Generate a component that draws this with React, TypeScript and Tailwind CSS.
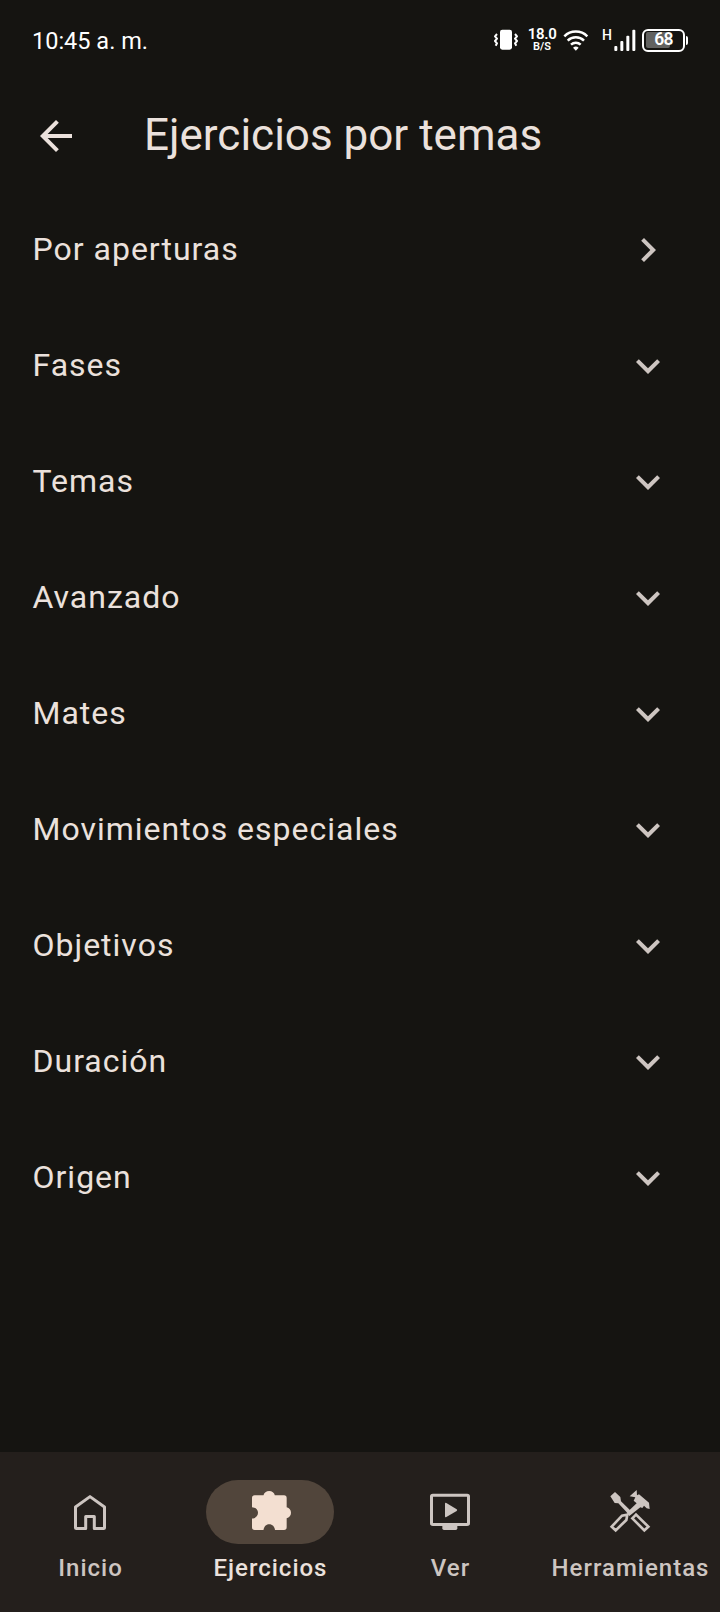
import type { ReactNode } from 'react';

type Section = { label: string; expandable: boolean };

const sections: Section[] = [
  { label: 'Por aperturas', expandable: false },
  { label: 'Fases', expandable: true },
  { label: 'Temas', expandable: true },
  { label: 'Avanzado', expandable: true },
  { label: 'Mates', expandable: true },
  { label: 'Movimientos especiales', expandable: true },
  { label: 'Objetivos', expandable: true },
  { label: 'Duración', expandable: true },
  { label: 'Origen', expandable: true },
];

function VibrateIcon() {
  return (
    <svg className="h-6 w-[26px]" viewBox="0 0 78 72" fill="none" stroke="#fff" strokeWidth="6">
      <rect x="21" y="5" width="36" height="60" rx="7" fill="#fff" stroke="none" />
      <path d="M12 18l-6 7 6 7-6 7 6 7-4 7M66 18l6 7-6 7 6 7-6 7 4 7" strokeLinejoin="round" />
    </svg>
  );
}

function WifiIcon() {
  return (
    <svg className="h-[21px] w-[26px]" viewBox="0 0 78 63" fill="none" stroke="#fff" strokeWidth="7.500">
      <path d="M4 19a49 49 0 0 1 69 0M14 32a35 35 0 0 1 49 0M24 44a21 21 0 0 1 29 0" />
      <path d="M30 53q8.500-7 17 0l-8.500 9z" fill="#fff" stroke="none" />
    </svg>
  );
}

function SignalIcon() {
  return (
    <svg className="h-[23px] w-[22px]" viewBox="0 0 66 69" fill="#fff">
      <rect x="1" y="51" width="9" height="15" rx="3" />
      <rect x="19" y="36" width="9" height="30" rx="3" />
      <rect x="37" y="20" width="9" height="46" rx="3" />
      <rect x="55" y="2" width="9" height="64" rx="3" />
    </svg>
  );
}

function Battery() {
  return (
    <div className="flex items-center gap-[1px]">
      <div className="relative flex h-[23px] w-[43px] items-center rounded-[6px] border-2 border-white p-[2px]">
        <div className="h-[16px] w-[24px] rounded-[2px] bg-[#626260]" />
        <span className="absolute inset-0 flex items-center justify-center text-[17.5px] leading-none font-semibold tracking-[-0.8px]">
          68
        </span>
      </div>
      <div className="h-[9px] w-[2px] rounded-r-sm bg-white" />
    </div>
  );
}

function StatusBar() {
  return (
    <div className="flex h-20 items-center justify-between pr-8 pl-8 text-white">
      <span className="pt-[3px] text-[23.5px] leading-none">10:45 a. m.</span>
      <div className="flex items-center">
        <VibrateIcon />
        <div className="mt-[-1px] ml-[9px] flex w-[28px] flex-col items-center whitespace-nowrap">
          <span className="text-[15px] leading-[14px] font-semibold tracking-[-0.3px]">18.0</span>
          <span className="text-[11px] leading-[11px] font-semibold">B/S</span>
        </div>
        <div className="ml-[7px]"><WifiIcon /></div>
        <span className="ml-[13px] pb-[10px] text-[14px] leading-none font-medium">H</span>
        <div className="ml-[2px]"><SignalIcon /></div>
        <div className="ml-[6px]"><Battery /></div>
      </div>
    </div>
  );
}

function HomeIcon() {
  return (
    <svg className="size-12" viewBox="66 1488 48 48" fill="none" stroke="#cdc5c1" strokeWidth="3" strokeLinejoin="round">
      <path d="M75.500 1507L90 1496.600 104.500 1507V1527.500a1 1 0 0 1-1 1H94.300V1516.500H85.700V1528.500H76.500a1 1 0 0 1-1-1z" />
    </svg>
  );
}

function PuzzleIcon() {
  return (
    <svg className="size-12" viewBox="198 144 144 144" fill="#f3dfd1">
      <path d="M224 166H250.500C252 158 259 153 267.500 153S283 158 284.500 166H312a8 8 0 0 1 8 8V202C328 203.500 333 210 333 218.500S328 233.500 320 235V262a8 8 0 0 1-8 8H285C284 260 277 253 267.500 253S252 260 250.500 270H224a8 8 0 0 1-8-8V235.500C227 235.500 234 228 234 218.500S227 202 216 201.500V174a8 8 0 0 1 8-8z" />
    </svg>
  );
}

function WatchIcon() {
  return (
    <svg className="size-12" viewBox="198 144 144 144" fill="#cdc5c1">
      <rect x="214.500" y="165.500" width="111" height="88" rx="4" fill="none" stroke="#cdc5c1" strokeWidth="9" />
      <path d="M247 256H292V265a5 5 0 0 1-5 5H252a5 5 0 0 1-5-5z" />
      <path d="M255 191q0-4 4-2L290 208q3 2 0 5L259 231q-4 2-4-2z" />
    </svg>
  );
}

function ToolsIcon() {
  return (
    <svg className="size-12" viewBox="198 144 144 144" fill="#cdc5c1">
      <path d="M211 169L225 156 241 171 243 184 272 212 263 220 235 190 224 189z" />
      <path d="M269 169L290 150 291 166 297 163 327 188 329 207 320 205 312 197 307 204 301 202 268 228 260 218 290 190 281 182 286 172z" />
      <g fill="none" stroke="#cdc5c1" strokeWidth="8">
        <path d="M215 260L246 227 262 224 259 240 227 271z" />
        <path d="M277 235L288 224 325 260 313 271z" />
      </g>
    </svg>
  );
}

function NavItem({ label, icon, active = false }: { label: string; icon: ReactNode; active?: boolean }) {
  return (
    <button
      className={
        active
          ? 'flex w-[180px] flex-col items-center pt-7 text-[#ebe1dc]'
          : 'flex w-[180px] flex-col items-center pt-7 text-[#cdc5c1]'
      }
    >
      <span
        className={
          active
            ? 'flex h-16 w-32 items-center justify-center rounded-full bg-[#51453b]'
            : 'flex h-16 w-32 items-center justify-center rounded-full'
        }
      >
        {icon}
      </span>
      <span className="mt-2 pl-px text-[24px] leading-8 font-medium tracking-[1px] whitespace-nowrap">{label}</span>
    </button>
  );
}

export default function App() {
  return (
    <div className="flex h-[1612px] w-[720px] flex-col overflow-hidden bg-[#151411] font-['Roboto',sans-serif] text-[#ebe1dc]">
      <StatusBar />
      <header className="flex h-28 items-center pl-8">
        <svg className="size-12" viewBox="0 0 24 24" fill="#ebe1dc">
          <path d="M20 11H7.830l5.590-5.590L12 4l-8 8 8 8 1.410-1.410L7.830 13H20z" />
        </svg>
        <h1 className="ml-16 pb-[2px] text-[44px] leading-none">Ejercicios por temas</h1>
      </header>
      <main className="flex flex-1 flex-col">
        {sections.map(({ label, expandable }) => (
          <div key={label} className="flex h-[116px] items-center justify-between pr-12 pl-[32.5px]">
            <span className="pb-[2px] text-[32px] leading-none tracking-[1px]">{label}</span>
            <svg className="size-12" viewBox="0 0 24 24" fill="#cdc5c1">
              {expandable ? (
                <path d="M16.590 8.590L12 13.170 7.410 8.590 6 10l6 6 6-6z" />
              ) : (
                <path d="M10 6L8.590 7.410 13.170 12l-4.580 4.590L10 18l6-6z" />
              )}
            </svg>
          </div>
        ))}
      </main>
      <nav className="flex h-40 items-start bg-[#241f1c]">
        <NavItem label="Inicio" icon={<HomeIcon />} />
        <NavItem label="Ejercicios" icon={<PuzzleIcon />} active />
        <NavItem label="Ver" icon={<WatchIcon />} />
        <NavItem label="Herramientas" icon={<ToolsIcon />} />
      </nav>
    </div>
  );
}
